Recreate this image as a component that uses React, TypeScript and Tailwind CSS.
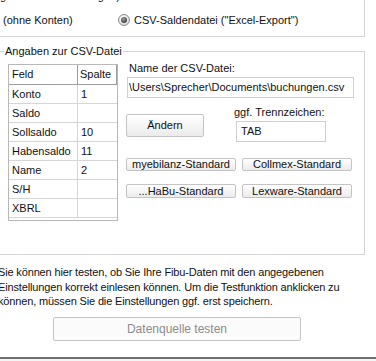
const rows: [string, string][] = [
  ["Konto", "1"],
  ["Saldo", ""],
  ["Sollsaldo", "10"],
  ["Habensaldo", "11"],
  ["Name", "2"],
  ["S/H", ""],
  ["XBRL", ""],
];

function Radio() {
  return (
    <svg width="12" height="12" viewBox="0 0 12 12" className="shrink-0">
      <defs>
        <radialGradient id="rb" cx="0.4" cy="0.35" r="0.7">
          <stop offset="0" stopColor="#ffffff" />
          <stop offset="1" stopColor="#d6d6d6" />
        </radialGradient>
        <radialGradient id="rd" cx="0.4" cy="0.35" r="0.7">
          <stop offset="0" stopColor="#9a9a9a" />
          <stop offset="1" stopColor="#3c3c3c" />
        </radialGradient>
      </defs>
      <circle cx="6" cy="6" r="5.5" fill="url(#rb)" stroke="#8e8e8e" />
      <circle cx="6" cy="6" r="3" fill="url(#rd)" />
    </svg>
  );
}

function WinButton({
  label,
  className,
  disabled,
}: {
  label: string;
  className: string;
  disabled?: boolean;
}) {
  return (
    <button
      disabled={disabled}
      className={`flex items-center justify-center border border-[#c4c4c4] rounded-[2px] bg-gradient-to-b from-white to-[#ebebeb] leading-none ${
        disabled ? "text-[#8c8c8c] bg-none bg-[#fbfbfb]" : "text-[#111]"
      } ${className}`}
    >
      {label}
    </button>
  );
}

export default function App() {
  return (
    <div className="w-[376px] h-[361px] overflow-hidden bg-white text-[11px] text-[#111] font-['Liberation_Sans',Arial,sans-serif] flex flex-col">
      {/* Auswahl der Datenquelle */}
      <div className="shrink-0 -ml-[4px] -mt-[20px] w-[369px] border border-[#d4d4d4] pt-[8px] pb-[9px]">
        <div className="h-[14px] leading-[14px] pl-[3px]">gn. Konto-Zuordnungen)</div>
        <div className="mt-[10px] h-[14px] flex items-center">
          <span className="pl-[6px] w-[121px] leading-[14px]">(ohne Konten)</span>
          <Radio />
          <span className="ml-[4px] leading-[14px]">CSV-Saldendatei ("Excel-Export")</span>
        </div>
      </div>

      {/* Angaben zur CSV-Datei */}
      <fieldset className="shrink-0 mt-[8px] -ml-[4px] w-[369px] border border-[#d4d4d4]">
        <legend className="ml-[7px] px-[1px] leading-[13px]">Angaben zur CSV-Datei</legend>
        <div className="flex items-start pl-[11px] pb-[33px]">
          <div className="mt-[6px] w-[110px] border border-[#b8b8b8] bg-white pb-[2px]">
            <div className="flex h-[20px] border-b border-[#9c9c9c]">
              <div className="w-[69px] pl-[3px] flex items-center border-r border-[#9c9c9c]">Feld</div>
              <div className="flex-1 pl-[2px] flex items-center border-r border-[#9c9c9c]">Spalte</div>
            </div>
            {rows.map(([feld, spalte]) => (
              <div key={feld} className="flex h-[19px] border-b border-[#d6d6d6]">
                <div className="w-[69px] pl-[3px] flex items-center border-r border-[#d6d6d6]">{feld}</div>
                <div className="flex-1 pl-[3px] flex items-center">{spalte}</div>
              </div>
            ))}
          </div>

          <div className="ml-[8px] flex flex-col">
            <div className="mt-[4px] ml-[3px] leading-[13px]">Name der CSV-Datei:</div>
            <div className="mt-[2px] ml-[1px] w-[227px] h-[21px] border border-[#cfcfcf] flex items-center pl-[1px] overflow-hidden whitespace-nowrap">
              \Users\Sprecher\Documents\buchungen.csv
            </div>
            <div className="flex items-start">
              <WinButton label="Ändern" className="mt-[16px] w-[78px] h-[23px]" />
              <div className="ml-[30px] flex flex-col">
                <div className="mt-[8px] leading-[13px]">ggf. Trennzeichen:</div>
                <div className="mt-[2px] ml-[2px] w-[90px] h-[21px] border border-[#cfcfcf] flex items-center pl-[4px]">
                  TAB
                </div>
              </div>
            </div>
            <div className="mt-[16px] flex gap-[6px]">
              <WinButton label="myebilanz-Standard" className="w-[110px] h-[13px]" />
              <WinButton label="Collmex-Standard" className="w-[110px] h-[13px]" />
            </div>
            <div className="mt-[13px] flex gap-[6px]">
              <WinButton label="...HaBu-Standard" className="w-[110px] h-[14px]" />
              <WinButton label="Lexware-Standard" className="w-[110px] h-[14px]" />
            </div>
          </div>
        </div>
      </fieldset>

      <p className="shrink-0 mt-[10px] -ml-[2px] leading-[14.5px] tracking-[-0.15px] whitespace-nowrap">
        Sie können hier testen, ob Sie Ihre Fibu-Daten mit den angegebenen
        <br />
        Einstellungen korrekt einlesen können. Um die Testfunktion anklicken zu
        <br />
        können, müssen Sie die Einstellungen ggf. erst speichern.
      </p>

      <div className="shrink-0 mt-[8px] pl-[53px]">
        <WinButton label="Datenquelle testen" disabled className="w-[248px] h-[24px] text-[12px]" />
      </div>

      <div className="shrink-0 mt-auto h-[4px] border-t-2 border-[#6f6f6f] bg-[#f4f4f4]" />
    </div>
  );
}
